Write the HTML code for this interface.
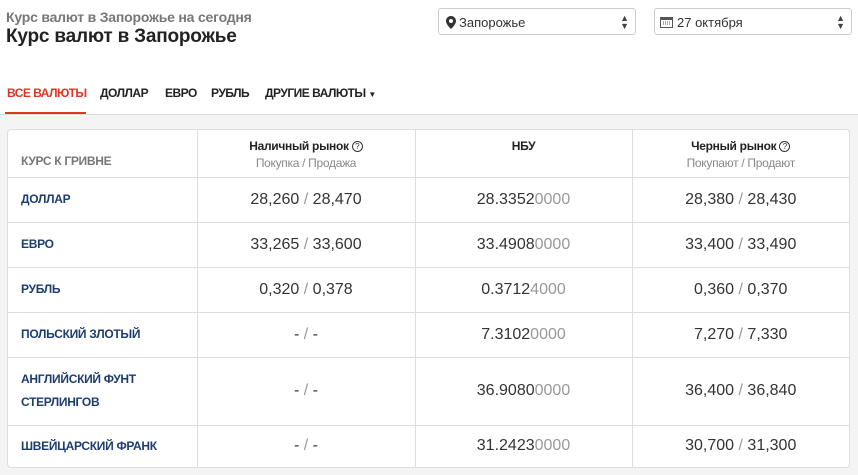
<!DOCTYPE html>
<html><head><meta charset="utf-8"><style>
*{margin:0;padding:0;box-sizing:border-box}
body{width:858px;height:475px;background:#fff;font-family:"Liberation Sans",Arial,sans-serif;position:relative;overflow:hidden}
.a{position:absolute}
.sub{left:6px;top:9px;font-size:14px;font-weight:bold;color:#777;letter-spacing:-0.2px}
.h1{left:6px;top:26px;font-size:19px;font-weight:bold;color:#222;letter-spacing:-0.2px}
.sel{top:8px;height:27px;border:1px solid #ccc;border-radius:3px;font-size:13px;color:#333;padding:6px 0 0 20px}
.arr{position:absolute;right:6px;top:5px;font-size:9px;line-height:8px;color:#444}
.tabs{top:86px;font-size:12px;font-weight:bold;color:#222;letter-spacing:-0.5px}
.gray{left:0;top:114px;width:858px;height:361px;background:#f4f4f4;border-top:1px solid #ddd}
.card{left:7px;top:129px;width:843px;height:339px;background:#fff;border:1px solid #ddd;border-radius:4px;overflow:hidden}
table{border-collapse:collapse;width:100%;table-layout:fixed}
td{border-bottom:1px solid #ddd;border-right:1px solid #ddd;text-align:center;font-size:16px;color:#333}
td:last-child,th:last-child{border-right:none}
tr:last-child td{border-bottom:none}
td.n{text-align:left;padding-left:13px;font-size:12px;font-weight:bold;color:#1d3d6e;line-height:23px;letter-spacing:-0.3px}
.s{color:#999}
.q{display:inline-block;width:11px;height:11px;border:1px solid #333;border-radius:50%;font-size:8px;line-height:9px;text-align:center;vertical-align:1px}
th{font-size:12px;color:#222;font-weight:bold;border-bottom:1px solid #ddd;border-right:1px solid #ddd;vertical-align:top;padding-top:9px;letter-spacing:-0.3px}
th span{display:block;font-weight:normal;color:#888;font-size:12px;margin-top:3px}
</style></head><body>
<div class="a sub">Курс валют в Запорожье на сегодня</div>
<div class="a h1">Курс валют в Запорожье</div>
<div class="a sel" style="left:438px;width:198px"><svg class="a" style="left:7px;top:7px" width="10" height="13" viewBox="0 0 10 13"><path d="M5 0C2.2 0 0 2.2 0 5c0 3.5 5 8 5 8s5-4.5 5-8C10 2.2 7.8 0 5 0zm0 7a2 2 0 110-4 2 2 0 010 4z" fill="#333"/></svg>Запорожье<div class="arr">▲<br>▼</div></div>
<div class="a sel" style="left:654px;width:198px;padding-left:22px"><svg class="a" style="left:5px;top:7px" width="13" height="12" viewBox="0 0 13 12"><rect x="0.5" y="1.5" width="12" height="10" fill="#fff" stroke="#555"/><rect x="0.5" y="1.5" width="12" height="2.5" fill="#555"/><path d="M3 6h1M5 6h1M7 6h1M9 6h1M3 8h1M5 8h1M7 8h1M9 8h1" stroke="#555"/></svg>27 октября<div class="arr">▲<br>▼</div></div>
<div class="a tabs" style="left:7px;color:#e0351f">ВСЕ ВАЛЮТЫ</div>
<div class="a" style="left:5px;top:112px;width:81px;height:2px;background:#e0351f;z-index:2"></div>
<div class="a tabs" style="left:100px">ДОЛЛАР</div>
<div class="a tabs" style="left:165px">ЕВРО</div>
<div class="a tabs" style="left:211px">РУБЛЬ</div>
<div class="a tabs" style="left:265px">ДРУГИЕ ВАЛЮТЫ <span style="font-size:8px">▼</span></div>
<div class="a gray"></div>
<div class="a card"><table>
<colgroup><col style="width:189px"><col style="width:218px"><col style="width:217px"><col></colgroup>
<tr style="height:47px"><th style="text-align:left;padding-left:13px;vertical-align:bottom;padding-bottom:9px;color:#777">КУРС К ГРИВНЕ</th><th>Наличный рынок <span class="q" style="display:inline-block;margin:0;font-weight:normal;color:#333">?</span><span>Покупка / Продажа</span></th><th>НБУ</th><th>Черный рынок <span class="q" style="display:inline-block;margin:0;font-weight:normal;color:#333">?</span><span>Покупают / Продают</span></th></tr>
<tr style="height:45px"><td class="n">ДОЛЛАР</td><td>28,260 <span class="s">/</span> 28,470</td><td>28.3352<span class="s">0000</span></td><td>28,380 <span class="s">/</span> 28,430</td></tr>
<tr style="height:45px"><td class="n">ЕВРО</td><td>33,265 <span class="s">/</span> 33,600</td><td>33.4908<span class="s">0000</span></td><td>33,400 <span class="s">/</span> 33,490</td></tr>
<tr style="height:45px"><td class="n">РУБЛЬ</td><td>0,320 <span class="s">/</span> 0,378</td><td>0.3712<span class="s">4000</span></td><td>0,360 <span class="s">/</span> 0,370</td></tr>
<tr style="height:45px"><td class="n">ПОЛЬСКИЙ ЗЛОТЫЙ</td><td>- <span class="s">/</span> -</td><td>7.3102<span class="s">0000</span></td><td>7,270 <span class="s">/</span> 7,330</td></tr>
<tr style="height:68px"><td class="n">АНГЛИЙСКИЙ ФУНТ<br>СТЕРЛИНГОВ</td><td>- <span class="s">/</span> -</td><td>36.9080<span class="s">0000</span></td><td>36,400 <span class="s">/</span> 36,840</td></tr>
<tr style="height:42px"><td class="n">ШВЕЙЦАРСКИЙ ФРАНК</td><td>- <span class="s">/</span> -</td><td>31.2423<span class="s">0000</span></td><td>30,700 <span class="s">/</span> 31,300</td></tr>
</table></div>
</body></html>
